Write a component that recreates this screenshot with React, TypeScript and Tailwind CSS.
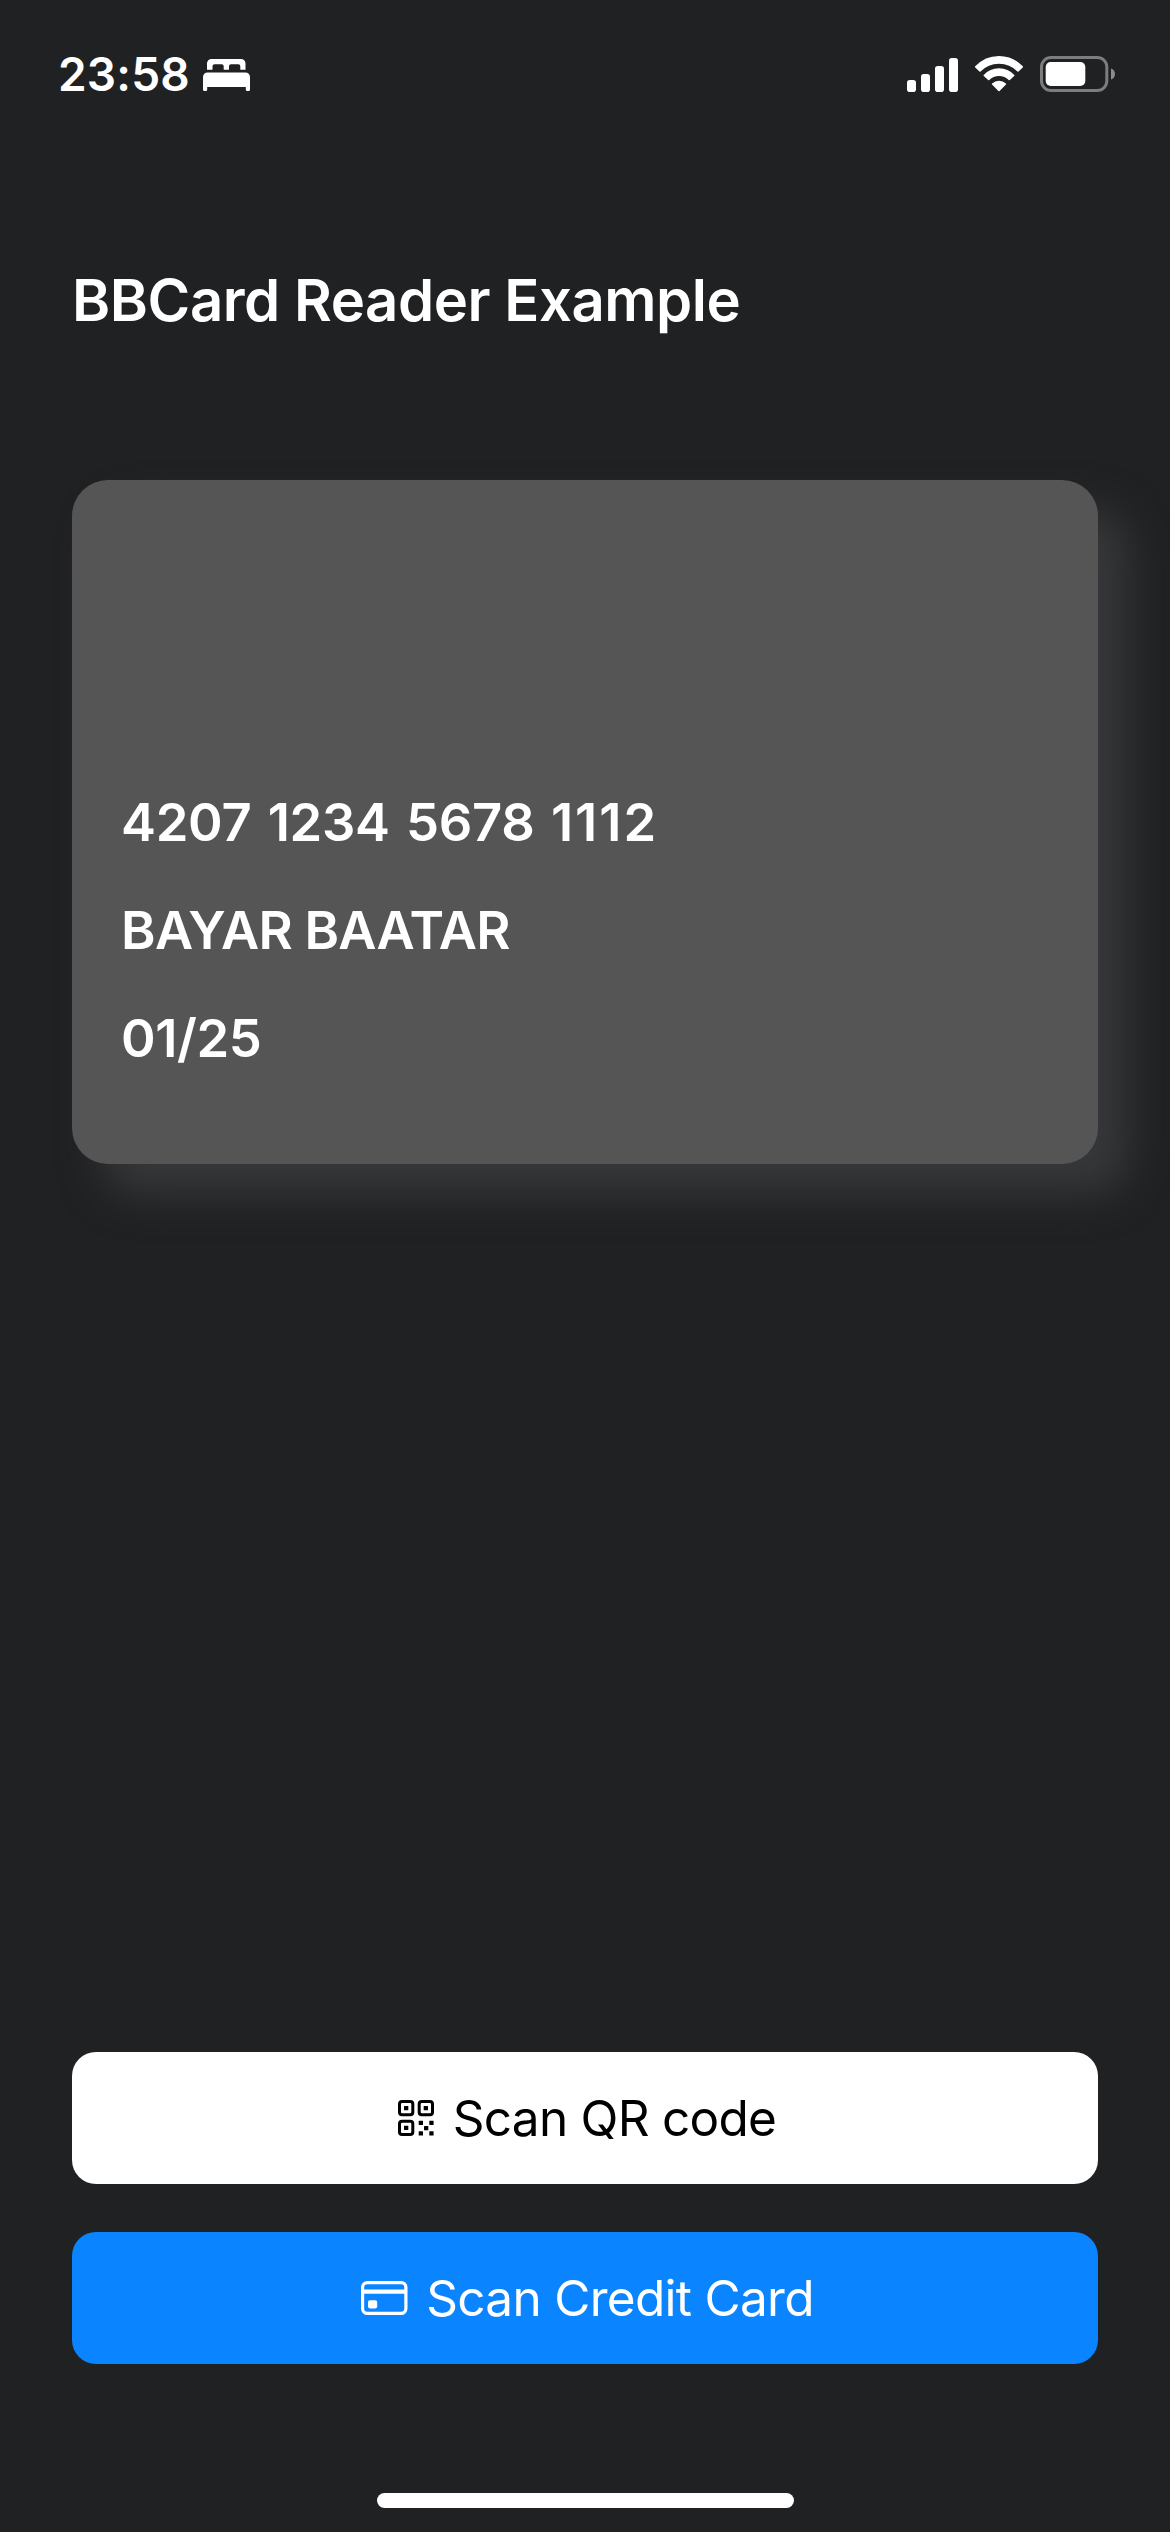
function BedIcon() {
  return (
    <svg width="47" height="32" viewBox="0 0 47 32" fill="currentColor" aria-hidden="true">
      <path d="M4 10.8V4.5A4.5 4.5 0 0 1 8.500 0H38A4.500 4.500 0 0 1 42.500 4.500V10.800H37.300V7.200A2 2 0 0 0 35.300 5.200H28A2 2 0 0 0 26 7.200V10.800H20.700V7.200A2 2 0 0 0 18.700 5.200H11.500A2 2 0 0 0 9.500 7.200V10.800Z" />
      <path d="M0 18A4.500 4.500 0 0 1 4.500 13.500H42.500A4.500 4.500 0 0 1 47 18V30.500A1.500 1.500 0 0 1 45.500 32H44.300A1.500 1.500 0 0 1 42.800 30.500V28H4.200V30.500A1.500 1.500 0 0 1 2.700 32H1.500A1.500 1.500 0 0 1 0 30.500Z" />
    </svg>
  );
}

function SignalIcon() {
  return (
    <svg width="51" height="35" viewBox="0 0 51 35" fill="currentColor" aria-hidden="true">
      <rect x="0" y="23" width="9" height="12" rx="2.800" />
      <rect x="14" y="17" width="9" height="18" rx="2.800" />
      <rect x="28" y="9" width="9" height="26" rx="2.800" />
      <rect x="42" y="1" width="9" height="34" rx="2.800" />
    </svg>
  );
}

function WifiIcon() {
  return (
    <svg
      width="50"
      height="37"
      viewBox="974 54.500 50 37"
      fill="currentColor"
      stroke="currentColor"
      strokeWidth="1.600"
      strokeLinejoin="round"
      aria-hidden="true"
    >
      <path d="M975.800 66.400A31.500 31.500 0 0 1 1022.200 66.400L1018 70.400A26.500 26.500 0 0 0 980 70.400Z" />
      <path d="M984.300 75A20 20 0 0 1 1013.700 75L1009.300 79A14.500 14.500 0 0 0 988.700 79Z" />
      <path d="M992.600 83.500A9.500 9.500 0 0 1 1005.400 83.500L999 90Z" />
    </svg>
  );
}

function BatteryIcon() {
  return (
    <svg width="75" height="36" viewBox="0 0 75 36" aria-hidden="true">
      <rect x="1.500" y="1.500" width="65.300" height="33" rx="9.500" fill="none" stroke="#7c7d7e" strokeWidth="3" />
      <path d="M71 12.500C73.500 13.300 75 15.400 75 18C75 20.600 73.500 22.700 71 23.500Z" fill="#8c8d8e" />
      <rect x="5.700" y="6" width="39.600" height="24" rx="5" fill="#fff" />
    </svg>
  );
}

function QrIcon() {
  const finders = [
    [0, 0],
    [19.700, 0],
    [0, 19.700],
  ];
  const modules = [
    [20.700, 20.700],
    [31.300, 20.700],
    [26, 26],
    [20.700, 31.300],
    [31.300, 31.300],
  ];
  return (
    <svg width="36" height="36" viewBox="0 0 36 36" fill="currentColor" aria-hidden="true">
      {finders.map(([x, y]) => (
        <g key={`${x}-${y}`}>
          <rect x={x + 1.500} y={y + 1.500} width="13.300" height="13.300" rx="2.600" fill="none" stroke="currentColor" strokeWidth="3" />
          <rect x={x + 6} y={y + 6} width="4.300" height="4.300" rx="0.400" />
        </g>
      ))}
      {modules.map(([x, y]) => (
        <rect key={`${x}-${y}`} x={x} y={y} width="4.300" height="4.300" rx="0.400" />
      ))}
    </svg>
  );
}

function CreditCardIcon() {
  return (
    <svg width="47" height="34" viewBox="0 0 47 34" aria-hidden="true">
      <rect x="1.600" y="1.600" width="43.300" height="30.800" rx="4.800" fill="none" stroke="currentColor" strokeWidth="3.200" />
      <path d="M1.600 8.600H44.900V12.700H1.600Z" fill="currentColor" />
      <rect x="7" y="19.200" width="9.200" height="8.200" rx="1.800" fill="currentColor" />
    </svg>
  );
}

export default function App() {
  return (
    <div className="flex h-[2532px] w-full flex-col overflow-hidden bg-[#202123] font-['Inter',sans-serif] text-white">
      <header className="flex h-[148px] items-center justify-between pr-[55px] pl-[58px]">
        <div className="flex items-center gap-[13px]">
          <span className="text-[46px] leading-none font-semibold tracking-[0.2px]">23:58</span>
          <div className="mt-0.5">
            <BedIcon />
          </div>
        </div>
        <div className="flex items-center">
          <div className="mr-4">
            <SignalIcon />
          </div>
          <div className="mr-4 -mt-0.5">
            <WifiIcon />
          </div>
          <BatteryIcon />
        </div>
      </header>

      <main className="flex flex-1 flex-col px-[72px]">
        <h1 className="mt-[116px] text-[58px] leading-[72px] font-semibold tracking-[-0.44px]">
          BBCard Reader Example
        </h1>

        <section className="mt-36 flex h-[684px] flex-col justify-end gap-11 rounded-[36px] bg-[#555555] pb-[94px] pl-[49px] text-[52.5px] leading-[64px] font-semibold shadow-[30px_30px_42px_0_#37383a]">
          <p className="tracking-[-0.3px] [word-spacing:3.4px]">
            4207 1234 5678 <span className="tracking-[2px]">1112</span>
          </p>
          <p className="tracking-[-0.73px]">BAYAR BAATAR</p>
          <p className="tracking-[-0.4px]">01/25</p>
        </section>

        <div className="mt-auto mb-[129px] flex flex-col gap-12 text-[49.5px]">
          <button className="flex h-[132px] items-center justify-center gap-[19px] rounded-3xl bg-white pl-1 tracking-[-0.73px] text-black">
            <QrIcon />
            <span>Scan QR code</span>
          </button>
          <button className="flex h-[132px] items-center justify-center gap-[18px] rounded-3xl bg-[#0a84ff] pl-[5px] tracking-[-0.7px]">
            <CreditCardIcon />
            <span>Scan Credit Card</span>
          </button>
        </div>
      </main>

      <footer className="flex h-[39px] justify-center">
        <div className="h-[15px] w-[417px] rounded-full bg-white" />
      </footer>
    </div>
  );
}
